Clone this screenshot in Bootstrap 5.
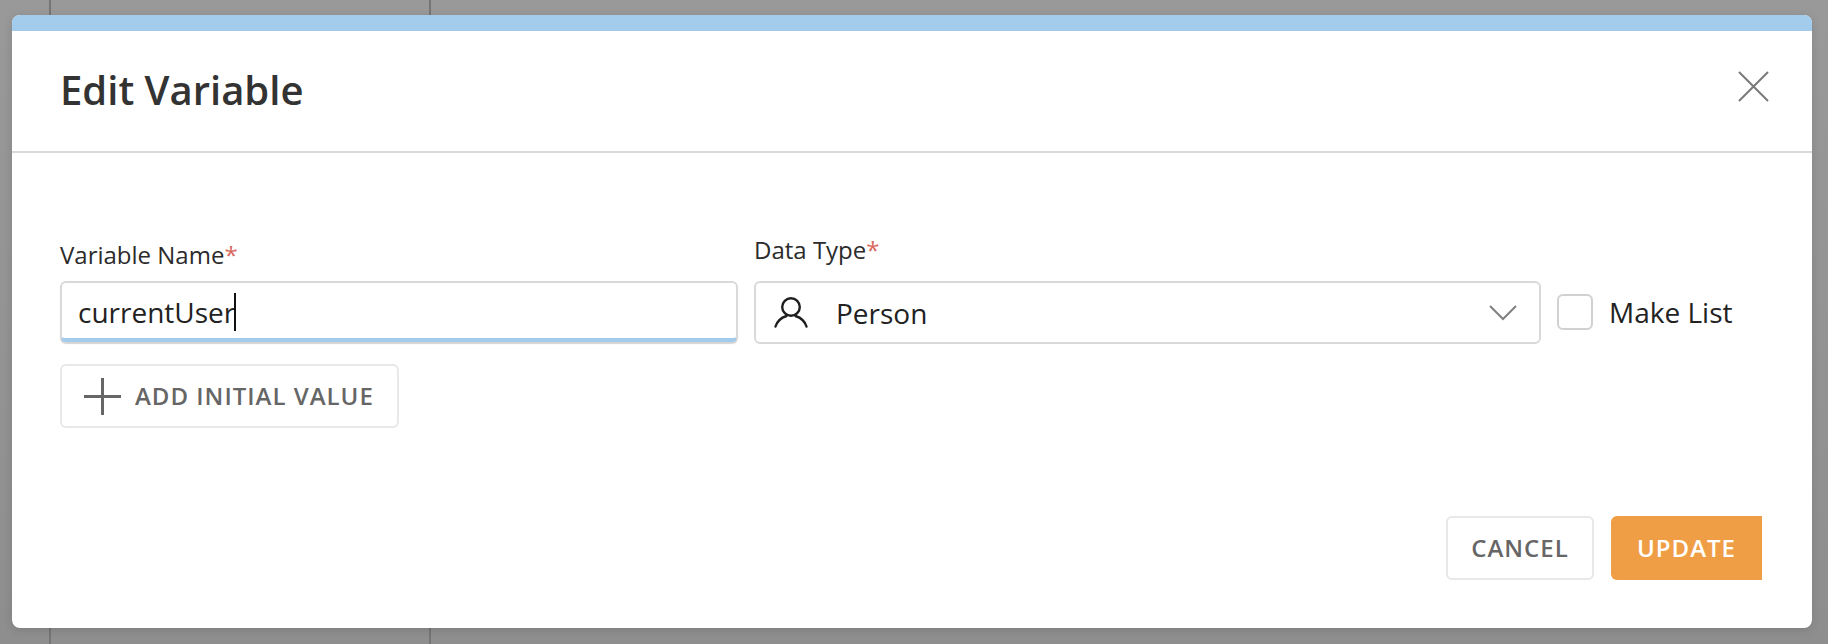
<!DOCTYPE html>
<html lang="en">
<head>
<meta charset="utf-8">
<title>Edit Variable</title>
<link rel="stylesheet" href="https://cdn.jsdelivr.net/npm/bootstrap@5.3.0/dist/css/bootstrap.min.css">
<style>
html, body { height: 100%; }
body {
  font-family: "Open Sans", sans-serif;
  overflow: hidden;
  padding: 15px 16px 15px 12px;
  background:
    linear-gradient(#757575, #757575) 49px 0 / 2px 100% no-repeat,
    linear-gradient(#757575, #757575) 429px 0 / 2px 100% no-repeat,
    linear-gradient(#999999, #8e8e8e);
}
.dlg {
  height: 613px;
  border: 0;
  border-radius: 8px;
  overflow: hidden;
  box-shadow: 0 2px 10px rgba(0,0,0,.12);
}
.dlg-stripe { height: 16px; background: #a3cbec; }
.dlg-head {
  height: 122px;
  padding: 0 43px 0 48px;
  border-bottom: 2px solid #d9d9d9;
}
.dlg-title { font-size: 40px; font-weight: 600; color: #333; margin: 0; padding-bottom: 2px; }
.dlg-close { background: none; border: 0; padding: 0; line-height: 0; margin-bottom: 9px; }
.dlg-body { padding: 80px 50px 48px 48px; }
.f-name { width: 678px; }
.f-type { width: 787px; margin-left: 16px; }
.f-label { font-size: 24px; color: #2b2b2b; line-height: 33px; margin: 0; }
.f-label-a { margin-bottom: 10px; }
.f-label-b { margin-bottom: 15px; }
.req { color: #d9675c; }
.f-caretwrap { height: 63px; }
.f-input.form-control {
  height: 61px;
  font-size: 28px;
  color: #222;
  padding: 3px 16px 0;
  border: 2px solid #d9d9d9;
  border-bottom: 4px solid #a3cbec;
  border-radius: 6px;
  box-shadow: 0 2px 1px #d4d4d4;
}
.f-caret { position: absolute; left: 174px; top: 12px; width: 2px; height: 38px; background: #111; }
.f-select {
  height: 63px;
  border: 2px solid #d9d9d9;
  border-radius: 6px;
  padding: 0 22px 0 18px;
  font-size: 28px;
  color: #222;
}
.f-select-name { margin-left: 28px; }
.f-check { margin: 0 0 14px 16px; height: 36px; }
.f-box { width: 36px; height: 36px; border: 2px solid #d1d1d1; border-radius: 6px; background: #fff; }
.f-check-text { font-size: 28px; color: #222; margin-left: 16px; }
.btn-add, .btn-cancel, .btn-update {
  height: 64px;
  font-size: 24px;
  font-weight: 600;
  letter-spacing: 1px;
  border-radius: 6px;
  padding: 0;
}
.btn-add, .btn-cancel { background: #fff; border: 2px solid #e8e8e8; color: #666; }
.btn-add { width: 339px; margin-top: 20px; gap: 14px; padding-left: 22px; }
.btn-cancel { width: 148px; }
.btn-update {
  width: 151px; margin-left: 17px; background: #f09e46; border: 0; color: #fff;
  border-radius: 6px 0 0 6px;
}
.dlg-foot { margin-top: 88px; }
</style>
</head>
<body>
<div class="card dlg">
  <div class="dlg-stripe"></div>
  <div class="dlg-head d-flex align-items-center justify-content-between">
    <h1 class="dlg-title">Edit Variable</h1>
    <button class="dlg-close" type="button" aria-label="Close">
      <svg width="31" height="31" viewBox="0 0 31 31" fill="none" stroke="#7a7a7a" stroke-width="2"><path d="M1 1 30 30M30 1 1 30"/></svg>
    </button>
  </div>
  <div class="dlg-body">
    <div class="d-flex align-items-end">
      <div class="f-name">
        <label class="f-label f-label-a d-block">Variable Name<span class="req">*</span></label>
        <div class="position-relative f-caretwrap">
          <input class="form-control f-input" type="text" value="currentUser">
          <span class="f-caret"></span>
        </div>
      </div>
      <div class="f-type">
        <label class="f-label f-label-b d-block">Data Type<span class="req">*</span></label>
        <div class="f-select d-flex align-items-center">
          <svg width="34" height="31" viewBox="0 0 34 31" fill="none" stroke="#1e1e1e" stroke-width="2.4" stroke-linecap="round"><circle cx="17" cy="10" r="8.8"/><path d="M1.5 29.5C3.5 23 9.5 20 12.5 19M32.5 29.5C30.5 23 24.5 20 21.5 19"/></svg>
          <span class="f-select-name">Person</span>
          <svg class="ms-auto" width="28" height="16" viewBox="0 0 28 16" fill="none" stroke="#808080" stroke-width="2"><path d="M1 1 14 14 27 1"/></svg>
        </div>
      </div>
      <div class="f-check d-flex align-items-center">
        <span class="f-box"></span>
        <span class="f-check-text">Make List</span>
      </div>
    </div>
    <button type="button" class="btn btn-add d-flex align-items-center">
      <svg width="37" height="37" viewBox="0 0 37 37" fill="none" stroke="#666" stroke-width="3"><path d="M18.5 0V37M0 18.5H37"/></svg>
      <span>ADD INITIAL VALUE</span>
    </button>
    <div class="dlg-foot d-flex justify-content-end">
      <button type="button" class="btn btn-cancel">CANCEL</button>
      <button type="button" class="btn btn-update">UPDATE</button>
    </div>
  </div>
</div>
<script src="https://cdn.jsdelivr.net/npm/bootstrap@5.3.0/dist/js/bootstrap.bundle.min.js"></script>
</body>
</html>
